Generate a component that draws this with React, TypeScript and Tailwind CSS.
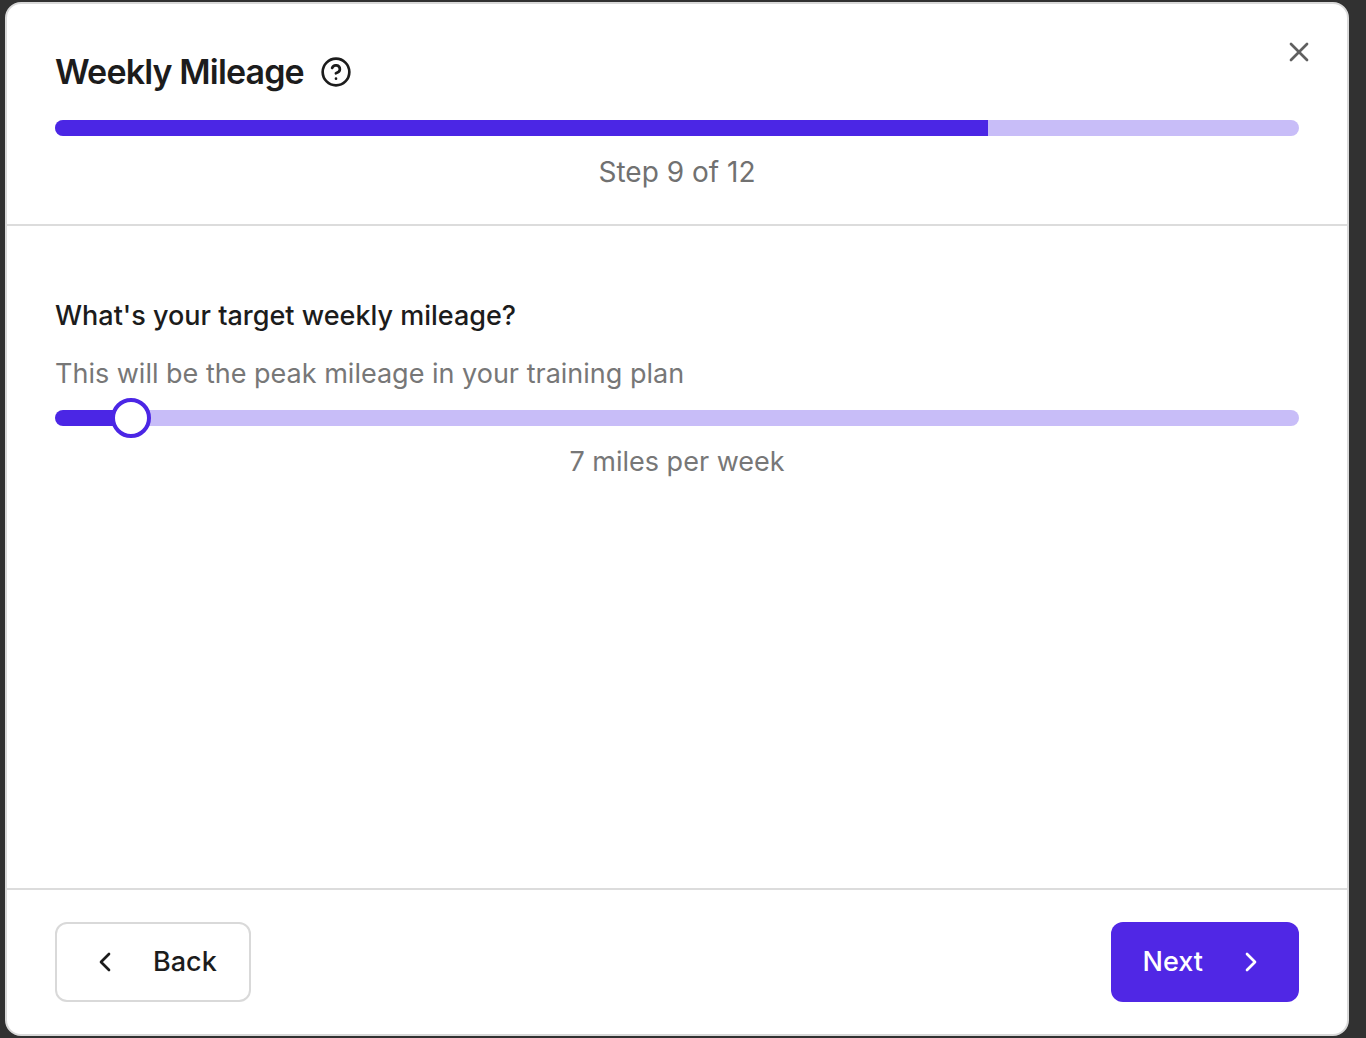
import { useState } from "react";
import type { CSSProperties } from "react";
import { ChevronLeft, ChevronRight, CircleHelp, X } from "lucide-react";

const STEP = 9;
const TOTAL_STEPS = 12;
const MAX_MILES = 150;

function ProgressBar({ value, max }: { value: number; max: number }) {
  return (
    <div
      role="progressbar"
      aria-label="Setup progress"
      aria-valuenow={value}
      aria-valuemin={0}
      aria-valuemax={max}
      className="h-4 w-full overflow-hidden rounded-full bg-[#c8bdf8]"
    >
      <div className="h-full bg-[#4b26e5]" style={{ width: `${(value / max) * 100}%` }} />
    </div>
  );
}

function MileageSlider({ value, onChange }: { value: number; onChange: (miles: number) => void }) {
  const fraction = value / MAX_MILES;
  const fill = { "--fill": `calc(20px + (100% - 40px) * ${fraction})` } as CSSProperties;
  return (
    <input
      id="mileage"
      type="range"
      min={0}
      max={MAX_MILES}
      value={value}
      onChange={(e) => onChange(Number(e.target.value))}
      aria-describedby="mileage-hint"
      style={fill}
      className="block h-10 w-full cursor-pointer appearance-none bg-transparent [&::-webkit-slider-runnable-track]:h-4 [&::-webkit-slider-runnable-track]:rounded-full [&::-webkit-slider-runnable-track]:bg-[linear-gradient(to_right,#4b26e5_var(--fill),#c8bdf8_var(--fill))] [&::-webkit-slider-thumb]:-mt-3 [&::-webkit-slider-thumb]:size-10 [&::-webkit-slider-thumb]:appearance-none [&::-webkit-slider-thumb]:rounded-full [&::-webkit-slider-thumb]:border-4 [&::-webkit-slider-thumb]:border-[#4b26e5] [&::-webkit-slider-thumb]:bg-white"
    />
  );
}

export default function App() {
  const [miles, setMiles] = useState(7);

  return (
    <div className="flex min-h-screen bg-[#313131] pt-0.5 pr-[17px] pb-0.5 pl-[5px] font-['Inter',sans-serif] text-[27px] leading-10 text-[#1c1c1c]">
      <main
        role="dialog"
        aria-labelledby="title"
        className="relative flex flex-1 flex-col rounded-2xl border-2 border-[#d9d9d9] bg-white"
      >
        <button
          type="button"
          aria-label="Close"
          className="absolute top-8 right-8 text-[#606060]"
        >
          <X className="size-8" />
        </button>

        <header className="border-b-2 border-[#dcdcdc] px-12 pt-12 pb-8">
          <div className="flex items-center gap-4">
            <h1 id="title" className="text-[34px] leading-10 font-semibold tracking-tight">
              Weekly Mileage
            </h1>
            <button type="button" aria-label="About weekly mileage">
              <CircleHelp className="size-8" />
            </button>
          </div>
          <div className="mt-7">
            <ProgressBar value={STEP} max={TOTAL_STEPS} />
          </div>
          <p className="mt-4 text-center text-[28px] leading-10 text-[#717171]">
            Step {STEP} of {TOTAL_STEPS}
          </p>
        </header>

        <section className="flex-1 px-12 pt-[70px]">
          <label htmlFor="mileage" className="block font-medium">
            What's your target weekly mileage?
          </label>
          <p id="mileage-hint" className="mt-[18px] text-[#777777]">
            This will be the peak mileage in your training plan
          </p>
          <div className="mt-1">
            <MileageSlider value={miles} onChange={setMiles} />
          </div>
          <p className="mt-1 text-center text-[#777777]">{miles} miles per week</p>
        </section>

        <footer className="flex justify-between border-t-2 border-[#dcdcdc] px-12 py-8 font-medium">
          <button
            type="button"
            className="flex h-20 items-center gap-8 rounded-xl border-2 border-[#d9d9d9] px-8"
          >
            <ChevronLeft className="size-8" />
            Back
          </button>
          <button
            type="button"
            className="flex h-20 items-center gap-8 rounded-xl bg-[#5027e5] px-8 text-white"
          >
            Next
            <ChevronRight className="size-8" />
          </button>
        </footer>
      </main>
    </div>
  );
}
